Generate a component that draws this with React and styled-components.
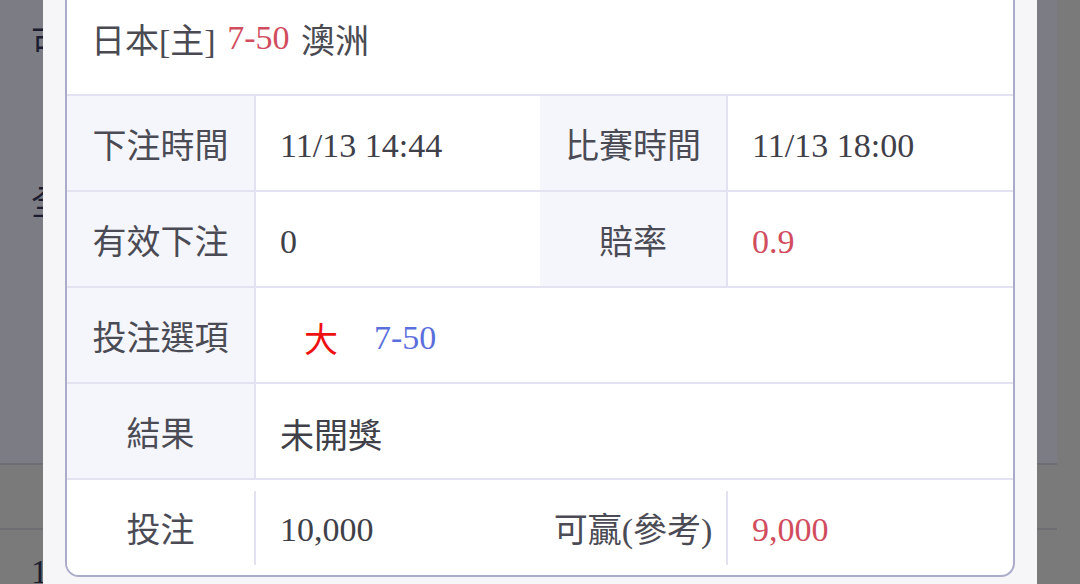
import React from "react";
import styled, { createGlobalStyle } from "styled-components";

const Global = createGlobalStyle`
  html, body { margin: 0; padding: 0; overflow: hidden; }
  body {
    font-family: "Liberation Serif", "Noto Sans CJK TC", serif;
    background: #7a7a7a;
  }
`;

const LINE = "#e2e2f1";

const Page = styled.div`
  display: grid;
  grid-template-columns: 1057px 1fr;
  height: 100vh;
  background: #7a7a7a;
`;

const PageMain = styled.div`
  display: flex;
  flex-direction: column;
`;

const PageBlock = styled.div`
  height: ${(p) => p.$h}px;
  background: ${(p) => p.$bg || "#7a7a7a"};
  border-bottom: ${(p) => (p.$line ? "2px solid #6d6d72" : "none")};
  display: flex;
  flex-direction: column;
  gap: ${(p) => p.$gap || 0}px;
  padding-top: ${(p) => p.$pt || 0}px;
  box-sizing: border-box;
  overflow: hidden;
`;

const GhostText = styled.div`
  padding-left: 31px;
  font-size: 34px;
  line-height: 40px;
  color: #1c1c30;
  white-space: nowrap;
`;

const Overlay = styled.div`
  position: fixed;
  inset: 0;
  display: flex;
  justify-content: center;
`;

const Sheet = styled.div`
  width: 994px;
  height: 100vh;
  background: #f6f6f8;
  padding: 0 22px 7px;
  box-sizing: border-box;
  display: flex;
  flex-direction: column;
  justify-content: flex-end;
  overflow: hidden;
`;

const Card = styled.div`
  flex-shrink: 0;
  background: #ffffff;
  border: 2px solid #abacca;
  border-radius: 14px;
  overflow: hidden;
`;

const Header = styled.div`
  height: 112px;
  padding: 0 24px;
  display: flex;
  align-items: center;
  border-bottom: 2px solid ${LINE};
  font-size: 34px;
  word-spacing: 3px;
  color: #4a4a52;
  white-space: pre;
`;

const Row = styled.div`
  display: grid;
  grid-template-columns: 189px 284px 188px 1fr;
  height: ${(p) => (p.$last ? 95 : 96)}px;
  box-sizing: border-box;
  border-bottom: ${(p) => (p.$last ? "none" : `2px solid ${LINE}`)};
`;

const Label = styled.div`
  position: relative;
  display: flex;
  align-items: center;
  justify-content: center;
  background: ${(p) => (p.$plain ? "#ffffff" : "#f5f6fb")};
  border-right: 2px solid ${(p) => (p.$plain ? "transparent" : LINE)};
  font-size: 34px;
  color: #4b4b55;
  white-space: nowrap;

  &::after {
    content: "";
    display: ${(p) => (p.$plain ? "block" : "none")};
    position: absolute;
    right: -2px;
    top: 11px;
    bottom: 10px;
    width: 2px;
    background: ${LINE};
  }
`;

const Value = styled.div`
  display: flex;
  align-items: center;
  padding-left: 24px;
  padding-top: 5px;
  font-size: 34px;
  color: #404049;
  white-space: nowrap;
  grid-column: ${(p) => (p.$span ? "2 / -1" : "auto")};
`;

const Tone = styled.span`
  color: ${(p) =>
    p.$tone === "red" ? "#d14d5e" : p.$tone === "hot" ? "#ee1111" : p.$tone === "blue" ? "#5b6fdc" : "inherit"};
  margin-left: ${(p) => p.$ml || 0}px;
`;

export default function App() {
  return (
    <>
      <Global />
      <Page>
        <PageMain>
          <PageBlock $h={465} $bg="#7b7c84" $line $pt={24} $gap={120}>
            <GhostText>可</GhostText>
            <GhostText>全</GhostText>
          </PageBlock>
          <PageBlock $h={65} $line />
          <PageBlock $h={54} $pt={22}>
            <GhostText>1</GhostText>
          </PageBlock>
        </PageMain>
        <div />
      </Page>
      <Overlay>
        <Sheet>
          <Card>
            <Header>
              日本[主] <Tone $tone="red">7-50</Tone> 澳洲
            </Header>
            <Row>
              <Label>下注時間</Label>
              <Value>11/13 14:44</Value>
              <Label>比賽時間</Label>
              <Value>11/13 18:00</Value>
            </Row>
            <Row>
              <Label>有效下注</Label>
              <Value>0</Value>
              <Label>賠率</Label>
              <Value>
                <Tone $tone="red">0.9</Tone>
              </Value>
            </Row>
            <Row>
              <Label>投注選項</Label>
              <Value $span>
                <Tone $tone="hot" $ml={24}>大</Tone>
                <Tone $tone="blue" $ml={36}>7-50</Tone>
              </Value>
            </Row>
            <Row>
              <Label>結果</Label>
              <Value $span>未開獎</Value>
            </Row>
            <Row $last>
              <Label $plain>投注</Label>
              <Value>10,000</Value>
              <Label $plain>可贏(參考)</Label>
              <Value>
                <Tone $tone="red">9,000</Tone>
              </Value>
            </Row>
          </Card>
        </Sheet>
      </Overlay>
    </>
  );
}
